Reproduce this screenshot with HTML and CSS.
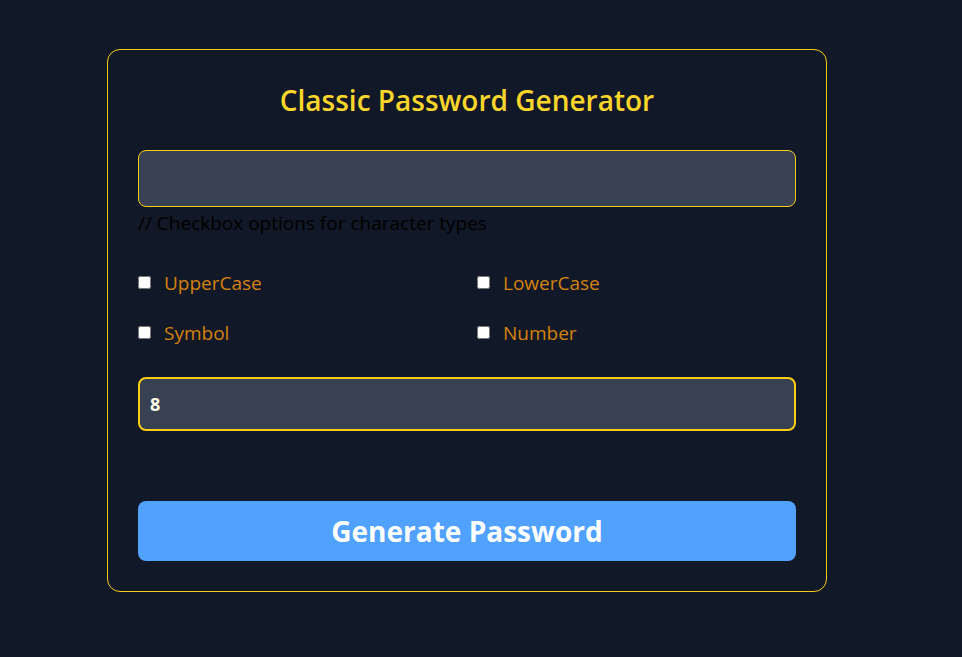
FILE: index.html
```html
<!DOCTYPE html>
<html lang="en">
<head>
<meta charset="utf-8">
<title>Classic Password Generator</title>
<link rel="stylesheet" href="styles.css">
</head>
<body>
<main class="page">
  <section class="card">
    <h1 class="title">Classic Password Generator</h1>
    <input class="output" type="text" readonly>
    <p class="comment">// Checkbox options for character types</p>
    <div class="options">
      <label class="option"><input type="checkbox"><span>UpperCase</span></label>
      <label class="option"><input type="checkbox"><span>LowerCase</span></label>
      <label class="option"><input type="checkbox"><span>Symbol</span></label>
      <label class="option"><input type="checkbox"><span>Number</span></label>
    </div>
    <input class="length" type="number" value="8">
    <button class="generate" type="button">Generate Password</button>
  </section>
</main>
</body>
</html>
```
FILE: styles.css
```css
* { box-sizing: border-box; }
html, body { margin: 0; padding: 0; }
body {
  background: #111827;
  font-family: "Open Sans", "Noto Sans", sans-serif;
  width: 962px;
  height: 657px;
  overflow: hidden;
}
.page {
  padding: 49px 0 0 107px;
}
.card {
  width: 720px;
  height: 543px;
  border: 1px solid #facc15;
  border-radius: 13px;
  padding: 30px;
  display: flex;
  flex-direction: column;
}
.title {
  margin: 3px 0 33px;
  text-align: center;
  color: #fcd629;
  font-size: 28px;
  line-height: 34px;
  font-weight: 600;
}
.output {
  height: 57px;
  background: #374151;
  border: 1px solid #facc15;
  border-radius: 8px;
  outline: none;
  color: #fff;
  font: inherit;
}
.comment {
  margin: 4px 0 0;
  color: #000;
  font-size: 19px;
  line-height: 24px;
}
.options {
  display: grid;
  grid-template-columns: 1fr 1fr;
  column-gap: 20px;
  row-gap: 26px;
  margin-top: 36px;
}
.option {
  display: flex;
  align-items: center;
  gap: 13px;
  height: 24px;
  color: #d6820a;
  font-size: 19px;
}
.option input {
  margin: 0;
  width: 13px;
  height: 13px;
  position: relative;
  top: -1px;
}
.length {
  margin-top: 32px;
  height: 54px;
  background: #374151;
  border: 2px solid #facc15;
  border-radius: 8px;
  padding: 0 10px;
  color: #fefce8;
  font: inherit;
  font-size: 18px;
  font-weight: 700;
  outline: none;
}
.generate {
  margin-top: 70px;
  height: 60px;
  background: #51a2ff;
  border: none;
  border-radius: 8px;
  color: #fff;
  font: inherit;
  font-size: 28px;
  font-weight: 700;
}
```
